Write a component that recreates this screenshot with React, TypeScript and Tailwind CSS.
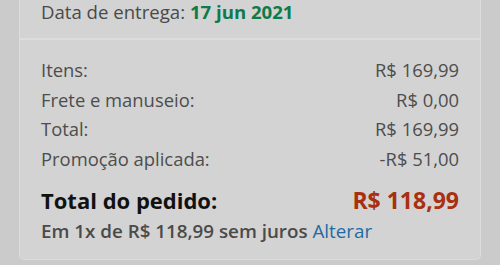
import React from 'react';

const rows = [
    { label: 'Itens:', value: 'R$ 169,99' },
    { label: 'Frete e manuseio:', value: 'R$ 0,00' },
    { label: 'Total:', value: 'R$ 169,99' },
    { label: 'Promoção aplicada:', value: '-R$ 51,00' },
];

export default function App() {
    return (
        <div className="w-[500px] h-[265px] overflow-hidden bg-[#cbcbcb] px-[19px] font-['Open_Sans',sans-serif]">
            <div className="h-[40px] bg-[#d3d3d3] border-x border-b-2 border-[#dcdcdc] pl-[21px]">
                <p className="text-[18.6px] leading-[24px] text-[#4a4a4a]">
                    Data de entrega: <span className="font-bold text-[#0f7a4a]">17 jun 2021</span>
                </p>
            </div>
            <div className="h-[220px] bg-[#d3d3d3] border border-t-0 border-[#dcdcdc] rounded-b-[5px] pl-[21px] pr-[21px] pt-[15px]">
                {rows.map((row) => (
                    <div key={row.label} className="flex justify-between text-[18.4px] leading-[29.5px] text-[#4d4d4d]">
                        <span>{row.label}</span>
                        <span>{row.value}</span>
                    </div>
                ))}
                <div className="flex justify-between items-baseline mt-[12px] leading-[30px] font-bold">
                    <span className="text-[22px] text-[#111]">Total do pedido:</span>
                    <span className="text-[23px] text-[#a8300f]">R$ 118,99</span>
                </div>
                <p className="mt-[2px] text-[18.8px] leading-[28px] font-semibold text-[#4a4a4a]">
                    Em 1x de R$ 118,99 sem juros <span className="font-normal text-[#1f6aa5]">Alterar</span>
                </p>
            </div>
        </div>
    );
}
